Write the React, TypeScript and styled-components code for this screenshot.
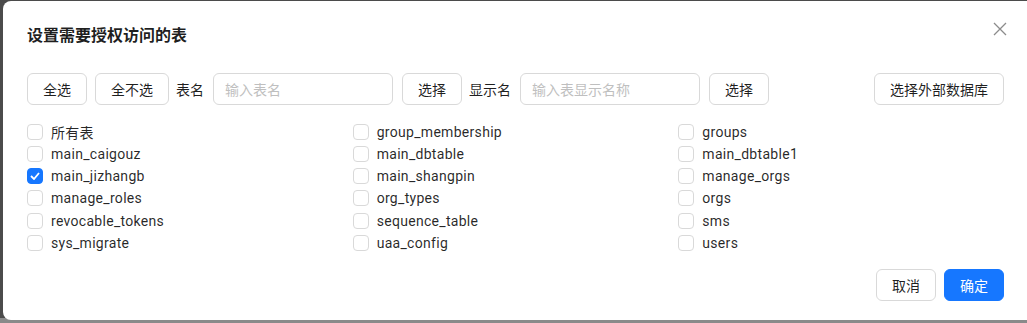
import React from "react";
import styled, {createGlobalStyle} from "styled-components";

const GlobalStyle = createGlobalStyle`
  html, body {
    margin: 0;
    padding: 0;
    background: #4b4b4b;
    overflow: hidden;
  }
  body {
    font-family: Roboto, "Noto Sans CJK SC", sans-serif;
  }
`;

const Page = styled.div`
  height: 323px;
  padding: 1px 0 3px 3px;
  box-sizing: border-box;
  background: linear-gradient(to bottom, #4b4b4b 0, #4b4b4b 318px, #8a8a8a 318px);
`;

const Modal = styled.div`
  position: relative;
  width: 1048px;
  height: 319px;
  box-sizing: border-box;
  background: #fff;
  border-radius: 8px;
  padding: 21px 45px 0 24px;
  color: rgba(0, 0, 0, 0.88);
`;

const Title = styled.div`
  font-family: "Noto Sans CJK SC", sans-serif;
  font-size: 16px;
  font-weight: 600;
  line-height: 24px;
  height: 24px;
  margin-bottom: 27px;
`;

const CloseBtn = styled.button`
  position: absolute;
  top: 17px;
  left: 986px;
  width: 22px;
  height: 22px;
  padding: 0;
  border: 0;
  background: transparent;
  display: flex;
  align-items: center;
  justify-content: center;
  cursor: pointer;
`;

const Toolbar = styled.div`
  display: flex;
  align-items: center;
  gap: 8px;
  height: 32px;
  width: 977px;
`;

const Button = styled.button<{$primary?: boolean}>`
  height: 32px;
  padding: 0 15px;
  box-sizing: border-box;
  border-radius: 6px;
  font-family: "Noto Sans CJK SC", sans-serif;
  font-size: 14px;
  line-height: 30px;
  cursor: pointer;
  flex-shrink: 0;
  border: 1px solid ${p => (p.$primary ? "#1677ff" : "#d9d9d9")};
  background: ${p => (p.$primary ? "#1677ff" : "#fff")};
  color: ${p => (p.$primary ? "#fff" : "rgba(0, 0, 0, 0.88)")};
`;

const Label = styled.span`
  font-family: "Noto Sans CJK SC", sans-serif;
  font-size: 14px;
  flex-shrink: 0;
  margin: 0 1px 0 -1px;
`;

const Input = styled.input`
  width: 180px;
  height: 32px;
  box-sizing: border-box;
  border: 1px solid #d9d9d9;
  border-radius: 6px;
  padding: 0 11px;
  font-family: "Noto Sans CJK SC", sans-serif;
  font-size: 14px;
  outline: none;
  flex-shrink: 0;
  margin-right: 1px;

  &::placeholder {
    color: #bfbfbf;
  }
`;

const Spacer = styled.div`
  flex: 1;
`;

const Grid = styled.div`
  margin-top: 15.5px;
  width: 977px;
  display: grid;
  grid-template-columns: repeat(3, 1fr);
  grid-auto-rows: 22.25px;
`;

const Item = styled.label`
  display: flex;
  align-items: center;
  gap: 8px;
  font-size: 14px;
  letter-spacing: 0.3px;
  cursor: pointer;
  color: rgba(0, 0, 0, 0.85);
`;

const Box = styled.span<{$checked?: boolean}>`
  width: 16px;
  height: 16px;
  box-sizing: border-box;
  border-radius: 4px;
  border: 1px solid ${p => (p.$checked ? "#1677ff" : "#d9d9d9")};
  background: ${p => (p.$checked ? "#1677ff" : "#fff")};
  display: flex;
  align-items: center;
  justify-content: center;
  flex-shrink: 0;
`;

const Footer = styled.div`
  margin-top: 15px;
  width: 977px;
  display: flex;
  justify-content: flex-end;
  gap: 8px;
`;

const tables = [
  "所有表", "group_membership", "groups",
  "main_caigouz", "main_dbtable", "main_dbtable1",
  "main_jizhangb", "main_shangpin", "manage_orgs",
  "manage_roles", "org_types", "orgs",
  "revocable_tokens", "sequence_table", "sms",
  "sys_migrate", "uaa_config", "users",
];

function App() {
  const [checked, setChecked] = React.useState<string[]>(["main_jizhangb"]);

  const toggle = (name: string) => {
    setChecked(c => (c.includes(name) ? c.filter(n => n !== name) : [...c, name]));
  };

  return (
    <Page>
      <GlobalStyle />
      <Modal>
        <Title>设置需要授权访问的表</Title>
        <CloseBtn aria-label="close">
          <svg width="14" height="14" viewBox="0 0 14 14">
            <path d="M1 1 L13 13 M13 1 L1 13" stroke="#8c8c8c" strokeWidth="1.3" fill="none" />
          </svg>
        </CloseBtn>
        <Toolbar>
          <Button onClick={() => setChecked([...tables])}>全选</Button>
          <Button onClick={() => setChecked([])}>全不选</Button>
          <Label>表名</Label>
          <Input placeholder="输入表名" />
          <Button>选择</Button>
          <Label>显示名</Label>
          <Input placeholder="输入表显示名称" />
          <Button>选择</Button>
          <Spacer />
          <Button>选择外部数据库</Button>
        </Toolbar>
        <Grid>
          {tables.map(name => {
            const on = checked.includes(name);
            return (
              <Item key={name} onClick={() => toggle(name)}>
                <Box $checked={on}>
                  {on && (
                    <svg width="10" height="8" viewBox="0 0 10 8">
                      <path d="M1 4 L4 7 L9 1" stroke="#fff" strokeWidth="1.8" fill="none" />
                    </svg>
                  )}
                </Box>
                {name}
              </Item>
            );
          })}
        </Grid>
        <Footer>
          <Button>取消</Button>
          <Button $primary>确定</Button>
        </Footer>
      </Modal>
    </Page>
  );
}

export default App;
